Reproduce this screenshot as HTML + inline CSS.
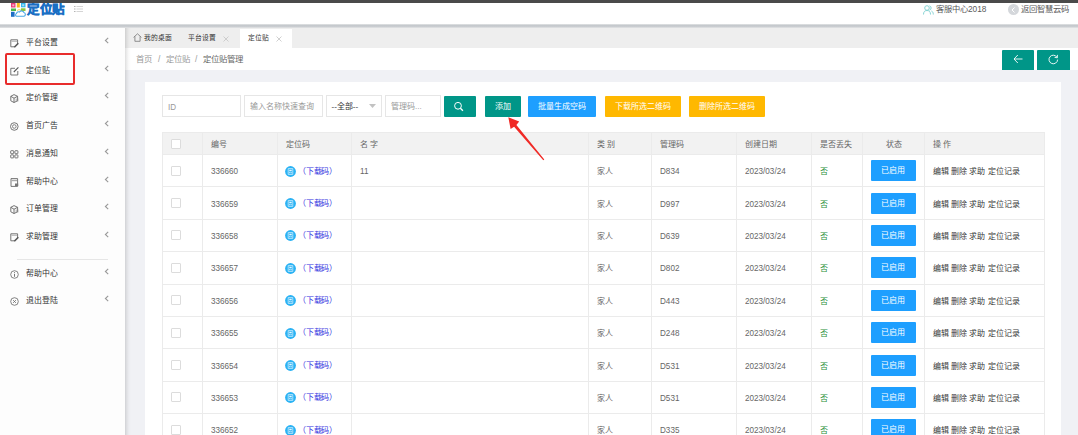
<!DOCTYPE html>
<html lang="zh-CN">
<head>
<meta charset="utf-8">
<style>
*{margin:0;padding:0;box-sizing:border-box}
html,body{width:1078px;height:435px;overflow:hidden;background:#f2f2f2;font-family:"Liberation Sans",sans-serif;color:#333}
.a{position:absolute}
#topbar{left:0;top:0;width:1078px;height:3px;background:#4a4a4a;z-index:5}
#header{left:0;top:3px;width:1078px;height:22px;background:#fff;z-index:3}
#hshadow{left:0;top:24px;width:1078px;height:4px;background:linear-gradient(#e8e9ea,#c4c8cc 30%,#c8cbcf 60%,#e4e5e6);z-index:4}
#side{left:0;top:28px;width:125px;height:407px;background:#fdfdfd;z-index:2}
#sshadow{left:125px;top:25px;width:6px;height:410px;background:linear-gradient(90deg,rgba(0,0,0,.13),rgba(0,0,0,.07) 30%,rgba(0,0,0,.02) 65%,rgba(0,0,0,0));z-index:2}
.nav{position:absolute;left:0;width:124px;height:20px;font-size:7.9px;font-weight:500;color:#333;line-height:20px}
.nav .ic{position:absolute;left:10px;top:6px;width:9px;height:9px}
.nav .tx{position:absolute;left:26px;top:0}
.nav .ch{position:absolute;left:103.5px;top:4px;width:6px;height:7px}
#tabs{left:124px;top:25px;width:954px;height:23px;background:#eeeeee}
#crumb{left:124px;top:48px;width:954px;height:22px;background:#fff}
#content{left:124px;top:70px;width:954px;height:365px;background:#f0f1f5}
#card{left:145px;top:82px;width:916px;height:353px;background:#fff}
.tab{position:absolute;top:3.3px;height:19px;line-height:19px;font-size:6.8px;font-weight:500;color:#333}
.crumb{position:absolute;top:0;height:22px;line-height:22px;font-size:8.4px;color:#999}
.inp{position:absolute;top:95px;height:22px;border:1px solid #e6e6e6;background:#fff;font-size:8px;color:#999;line-height:21.5px;padding-left:5px}
.btn{position:absolute;top:96px;height:21px;line-height:21px;font-size:8px;color:#fff;text-align:center;border-radius:1px}
table{position:absolute;left:162px;top:132px;border-collapse:collapse;table-layout:fixed;font-size:8px;color:#666}
th{height:22px;background:#f2f2f2;font-weight:normal;text-align:left;padding-left:8px;border:1px solid #ebebeb;color:#666}
td{height:32.4px;text-align:left;padding-left:8px;border:1px solid #ebebeb;color:#666;background:#fff}
.cb{display:inline-block;width:10px;height:10px;border:1px solid #dcdcdc;background:#fff;vertical-align:middle;border-radius:1px}
.qr{display:inline-block;vertical-align:middle;position:relative;top:-0.2px;left:-1.5px}
.n{display:inline-block;font-size:9.8px;transform:scaleX(.83);transform-origin:0 50%}
.dl{color:#3333e0;margin-left:1px;letter-spacing:-0.2px}
.st{display:inline-block;width:44.5px;height:21px;line-height:21px;background:#1e9fff;color:#fff;text-align:center;border-radius:1px}
.no{color:#2a8f3a}
.op{color:#3a3a3a!important}
</style>
</head>
<body>
<div id="topbar" class="a"></div>
<div id="hshadow" class="a"></div>
<div id="sshadow" class="a"></div>
<div id="header" class="a">
  <!-- logo -->
  <svg class="a" style="left:11px;top:0px" width="15" height="14" viewBox="0 0 15 14">
    <rect x="0" y="0" width="4.5" height="4.5" fill="#e8397a"/><rect x="1.3" y="1.3" width="2" height="2" fill="#f7b0c8"/>
    <rect x="5.8" y="0" width="3" height="4.5" fill="#f5b81c"/>
    <rect x="10" y="0" width="4.5" height="4.3" fill="#35b8ee"/><rect x="11.2" y="1.2" width="2" height="2" fill="#a8dcf5"/>
    <rect x="0" y="5.5" width="5" height="2.5" fill="#4db848"/>
    <rect x="10" y="5.3" width="4.5" height="2.7" fill="#8cc63f"/>
    <path d="M6 7.5 Q8 5.8 10 7.2" fill="none" stroke="#f3c94a" stroke-width=".9"/>
    <rect x="0" y="8.8" width="3.6" height="5" fill="#1f6fc5"/>
    <path d="M5.5 13.3 H13 A2 2 0 0 0 13 9.5 A2.6 2.6 0 0 0 8.5 9 A2 2 0 0 0 5.5 10.5 A1.5 1.5 0 0 0 5.5 13.3Z" fill="#fff" stroke="#4aa8e6" stroke-width="1.1"/>
  </svg>
  <div class="a" style="left:27px;top:-1px;font-size:12.5px;font-weight:900;color:#1a6fc4;-webkit-text-stroke:.5px #1a6fc4;line-height:16px;letter-spacing:-0.5px">定位贴</div>
  <!-- hamburger -->
  <svg class="a" style="left:73px;top:1px" width="11" height="9" viewBox="0 0 11 9"><path d="M1 2.5H2.5M1 5H2.5M1 7.5H2.5" stroke="#aaa" stroke-width=".9"/><path d="M3.5 2.5H10M3.5 5H10M3.5 7.5H10" stroke="#d0d0d0" stroke-width=".9"/></svg>
  <!-- right -->
  <svg class="a" style="left:923px;top:2px" width="11" height="10" viewBox="0 0 11 10"><circle cx="4" cy="3" r="2.3" fill="none" stroke="#86d3d3" stroke-width="1"/><path d="M0.5 9.5 C0.5 6.5 2 5.5 4 5.5 C6 5.5 7.5 6.5 7.5 9.5" fill="none" stroke="#86d3d3" stroke-width="1"/><path d="M6.5 0.8 A2.3 2.3 0 0 1 6.5 5.2 M8.5 6 C9.5 6.5 10.3 7.5 10.3 9.5" fill="none" stroke="#86d3d3" stroke-width="1"/></svg>
  <div class="a" style="left:936px;top:0;font-size:8.3px;line-height:13px;color:#5a5a5a">客服中心2018</div>
  <div class="a" style="left:1008px;top:1px;width:11px;height:11px;border-radius:50%;background:#d4d7db"></div>
  <svg class="a" style="left:1011px;top:3.5px" width="5" height="6" viewBox="0 0 5 6"><path d="M3.5 0.5 L1 3 L3.5 5.5" fill="none" stroke="#fff" stroke-width="1"/></svg>
  <div class="a" style="left:1020.5px;top:0;font-size:8.3px;line-height:13px;color:#5a5a5a">返回智慧云码</div>
</div>
<div id="side" class="a">
  <div class="nav" style="top:4.5px"><svg class="ic" viewBox="0 0 9 9"><path d="M.8 .8H7.6V5M.8 .8V7.8H4.5" fill="none" stroke="#666" stroke-width=".9"/><path d="M1.5 2.3H7" stroke="#aaa" stroke-width=".9"/><path d="M4.3 8.3L8.3 4.3" stroke="#555" stroke-width="1.6"/></svg><span class="tx">平台设置</span><svg class="ch" viewBox="0 0 6 7"><path d="M4.2 .8L1.4 3.5L4.2 6.2" fill="none" stroke="#999" stroke-width="1.1"/></svg></div>
  <div class="nav" style="top:32.5px"><svg class="ic" viewBox="0 0 9 9"><path d="M5 1.3H.8V8H7.8V4" fill="none" stroke="#666" stroke-width=".9"/><path d="M3.8 5L8.4 .4" stroke="#555" stroke-width="1.1"/></svg><span class="tx">定位贴</span><svg class="ch" viewBox="0 0 6 7"><path d="M4.2 .8L1.4 3.5L4.2 6.2" fill="none" stroke="#999" stroke-width="1.1"/></svg></div>
  <div class="nav" style="top:60.3px"><svg class="ic" viewBox="0 0 9 9"><path d="M.8 2.3L4 .6L7.6 2.3V6.8L4 8.5L.8 6.8Z M.8 2.3L4 4.2L7.6 2.3M4 4.2V8.5" fill="none" stroke="#666" stroke-width=".9"/><path d="M6.2 4.5V7.5M7.8 4.5V7.5" stroke="#888" stroke-width=".7"/></svg><span class="tx">定价管理</span><svg class="ch" viewBox="0 0 6 7"><path d="M4.2 .8L1.4 3.5L4.2 6.2" fill="none" stroke="#999" stroke-width="1.1"/></svg></div>
  <div class="nav" style="top:88px"><svg class="ic" viewBox="0 0 9 9"><circle cx="4.3" cy="4.5" r="3.8" fill="none" stroke="#666" stroke-width=".9"/><circle cx="4.3" cy="4.5" r="1.8" fill="none" stroke="#666" stroke-width=".8"/></svg><span class="tx">首页广告</span><svg class="ch" viewBox="0 0 6 7"><path d="M4.2 .8L1.4 3.5L4.2 6.2" fill="none" stroke="#999" stroke-width="1.1"/></svg></div>
  <div class="nav" style="top:115.8px"><svg class="ic" viewBox="0 0 9 9"><rect x=".7" y=".7" width="3" height="3" rx=".5" fill="none" stroke="#666" stroke-width=".9"/><rect x="4.9" y=".7" width="3" height="3" rx=".5" fill="none" stroke="#666" stroke-width=".9"/><rect x=".7" y="4.9" width="3" height="3" rx=".5" fill="none" stroke="#666" stroke-width=".9"/><rect x="4.9" y="4.9" width="3" height="3" rx=".5" fill="none" stroke="#666" stroke-width=".9"/></svg><span class="tx">消息通知</span><svg class="ch" viewBox="0 0 6 7"><path d="M4.2 .8L1.4 3.5L4.2 6.2" fill="none" stroke="#999" stroke-width="1.1"/></svg></div>
  <div class="nav" style="top:143.8px"><svg class="ic" viewBox="0 0 9 9"><path d="M1 .6H7.6V8.4H1Z" fill="none" stroke="#666" stroke-width=".9"/><path d="M1.5 2.5H7" stroke="#aaa" stroke-width="1.4"/><rect x="5" y="5.5" width="3.2" height="2.5" fill="#777"/></svg><span class="tx">帮助中心</span><svg class="ch" viewBox="0 0 6 7"><path d="M4.2 .8L1.4 3.5L4.2 6.2" fill="none" stroke="#999" stroke-width="1.1"/></svg></div>
  <div class="nav" style="top:171.1px"><svg class="ic" viewBox="0 0 9 9"><path d="M.8 2.3L4 .6L7.6 2.3V6.8L4 8.5L.8 6.8Z M.8 2.3L4 4.2L7.6 2.3M4 4.2V8.5" fill="none" stroke="#666" stroke-width=".9"/><path d="M6.2 4.5V7.5M7.8 4.5V7.5" stroke="#888" stroke-width=".7"/></svg><span class="tx">订单管理</span><svg class="ch" viewBox="0 0 6 7"><path d="M4.2 .8L1.4 3.5L4.2 6.2" fill="none" stroke="#999" stroke-width="1.1"/></svg></div>
  <div class="nav" style="top:199.1px"><svg class="ic" viewBox="0 0 9 9"><path d="M.8 .8H7.6V5M.8 .8V7.8H4.5" fill="none" stroke="#666" stroke-width=".9"/><path d="M1.5 2.3H7" stroke="#aaa" stroke-width=".9"/><path d="M4.3 8.3L8.3 4.3" stroke="#555" stroke-width="1.6"/></svg><span class="tx">求助管理</span><svg class="ch" viewBox="0 0 6 7"><path d="M4.2 .8L1.4 3.5L4.2 6.2" fill="none" stroke="#999" stroke-width="1.1"/></svg></div>
  <div class="nav" style="top:236px"><svg class="ic" viewBox="0 0 9 9"><circle cx="4.5" cy="4.5" r="3.8" fill="none" stroke="#666" stroke-width=".8"/><path d="M4.5 3.8V6.8M4.5 2.2V3" stroke="#666" stroke-width=".9"/></svg><span class="tx">帮助中心</span><svg class="ch" viewBox="0 0 6 7"><path d="M4.2 .8L1.4 3.5L4.2 6.2" fill="none" stroke="#999" stroke-width="1.1"/></svg></div>
  <div class="nav" style="top:263.1px"><svg class="ic" viewBox="0 0 9 9"><circle cx="4.5" cy="4.5" r="3.8" fill="none" stroke="#666" stroke-width=".8"/><path d="M3.1 3.1L5.9 5.9M5.9 3.1L3.1 5.9" stroke="#666" stroke-width=".8"/></svg><span class="tx">退出登陆</span><svg class="ch" viewBox="0 0 6 7"><path d="M4.2 .8L1.4 3.5L4.2 6.2" fill="none" stroke="#999" stroke-width="1.1"/></svg></div>
  <div class="a" style="left:17px;top:231px;width:91px;height:1px;background:#e6e6e6"></div>
  <div class="a" style="left:5px;top:24.5px;width:70px;height:32px;border:2px solid #e82c2c;border-radius:2px"></div>
</div>
<div id="tabs" class="a">
  <svg class="a" style="left:9px;top:8px" width="9" height="9" viewBox="0 0 9 9"><path d="M.6 4.4L4.5.8L8.4 4.4M1.9 3.4V8.3H7.1V3.4" fill="none" stroke="#777" stroke-width=".8"/></svg>
  <div class="tab" style="left:20px">我的桌面</div>
  <div class="tab" style="left:64px">平台设置</div>
  <svg class="a" style="left:98.5px;top:10.5px" width="6" height="6" viewBox="0 0 6 6"><path d="M.5 .5L5.5 5.5M5.5 .5L.5 5.5" stroke="#c4c4c4" stroke-width=".8"/></svg>
  <div class="a" style="left:116px;top:4px;width:52px;height:19px;background:#fff"></div>
  <div class="tab" style="left:124px">定位贴</div>
  <svg class="a" style="left:151.5px;top:10.5px" width="6" height="6" viewBox="0 0 6 6"><path d="M.5 .5L5.5 5.5M5.5 .5L.5 5.5" stroke="#c4c4c4" stroke-width=".8"/></svg>
</div>
<div id="crumb" class="a">
  <div class="crumb" style="left:12px">首页</div>
  <div class="crumb" style="left:34px">/</div>
  <div class="crumb" style="left:41.5px">定位贴</div>
  <div class="crumb" style="left:71px">/</div>
  <div class="crumb" style="left:78.5px;color:#666">定位贴管理</div>
  <div class="a" style="left:878px;top:2px;width:32px;height:20.5px;background:#009688;border-radius:1px"></div>
  <svg class="a" style="left:888.5px;top:5.5px" width="10" height="10" viewBox="0 0 10 10"><path d="M9.5 5H1M4.8 1L1 5L4.8 9" fill="none" stroke="#fff" stroke-width=".9"/></svg>
  <div class="a" style="left:913px;top:2px;width:33px;height:20.5px;background:#009688;border-radius:1px"></div>
  <svg class="a" style="left:923.5px;top:5.5px" width="11" height="11" viewBox="0 0 11 11"><path d="M9 3.3A4.3 4.3 0 1 0 9.6 5.6" fill="none" stroke="#fff" stroke-width=".9"/><path d="M9.4 .9L9.3 3.8L6.6 3.4" fill="none" stroke="#fff" stroke-width=".9"/></svg>
</div>
<div id="content" class="a"></div>
<div id="card" class="a"></div>

<!-- search bar -->
<div class="inp" style="left:162px;width:79px"><span class="n" style="font-size:9.5px;transform:scaleX(.85)">ID</span></div>
<div class="inp" style="left:244px;width:79px">输入名称快速查询</div>
<div class="inp" style="left:325.5px;width:56px;color:#333">--全部--</div>
<svg class="a" style="left:369px;top:104px" width="7" height="4" viewBox="0 0 7 4"><path d="M0 0H7L3.5 4Z" fill="#c2c2c2"/></svg>
<div class="inp" style="left:385px;width:56px">管理码...</div>
<div class="btn" style="left:444px;width:32px;background:#009688"></div>
<svg class="a" style="left:453px;top:101px" width="12" height="12" viewBox="0 0 12 12"><circle cx="5" cy="4.8" r="3.4" fill="none" stroke="#fff" stroke-width="1"/><path d="M7.4 7.2L9.9 9.7" stroke="#fff" stroke-width="1.3"/></svg>
<div class="btn" style="left:485px;width:36px;background:#009688">添加</div>
<div class="btn" style="left:528px;width:68px;background:#1e9fff">批量生成空码</div>
<div class="btn" style="left:604.5px;width:76px;background:#ffb800">下载所选二维码</div>
<div class="btn" style="left:688.5px;width:76px;background:#ffb800">删除所选二维码</div>

<table>
<colgroup><col style="width:40px"><col style="width:75px"><col style="width:74px"><col style="width:237px"><col style="width:63px"><col style="width:85px"><col style="width:75px"><col style="width:51px"><col style="width:62px"><col style="width:120px"></colgroup>
<tr><th><span class="cb"></span></th><th>编号</th><th>定位码</th><th>名 字</th><th>类 别</th><th>管理码</th><th>创建日期</th><th>是否丢失</th><th style="text-align:center;padding-left:0">状态</th><th>操 作</th></tr>
<tr><td><span class="cb"></span></td><td><span class="n">336660</span></td><td><svg class="qr" width="11" height="11" viewBox="0 0 11 11"><circle cx="5.5" cy="5.5" r="5.4" fill="#2ab2f4"/><path d="M3.2 2.6h4.6v5.8H3.2z" fill="none" stroke="#cfeefd" stroke-width=".8"/><path d="M4.3 3.8h2.4v1.4H4.3zM4.3 6h1v1.2h-1zM5.8 6.2h1v1h-1z" fill="#e6f6fe"/></svg><span class="dl">（下载码）</span></td><td><span class="n">11</span></td><td>家人</td><td><span class="n">D834</span></td><td><span class="n">2023/03/24</span></td><td class="no">否</td><td><span class="st">已启用</span></td><td class="op">编辑 删除 求助 定位记录</td></tr>
<tr><td><span class="cb"></span></td><td><span class="n">336659</span></td><td><svg class="qr" width="11" height="11" viewBox="0 0 11 11"><circle cx="5.5" cy="5.5" r="5.4" fill="#2ab2f4"/><path d="M3.2 2.6h4.6v5.8H3.2z" fill="none" stroke="#cfeefd" stroke-width=".8"/><path d="M4.3 3.8h2.4v1.4H4.3zM4.3 6h1v1.2h-1zM5.8 6.2h1v1h-1z" fill="#e6f6fe"/></svg><span class="dl">（下载码）</span></td><td></td><td>家人</td><td><span class="n">D997</span></td><td><span class="n">2023/03/24</span></td><td class="no">否</td><td><span class="st">已启用</span></td><td class="op">编辑 删除 求助 定位记录</td></tr>
<tr><td><span class="cb"></span></td><td><span class="n">336658</span></td><td><svg class="qr" width="11" height="11" viewBox="0 0 11 11"><circle cx="5.5" cy="5.5" r="5.4" fill="#2ab2f4"/><path d="M3.2 2.6h4.6v5.8H3.2z" fill="none" stroke="#cfeefd" stroke-width=".8"/><path d="M4.3 3.8h2.4v1.4H4.3zM4.3 6h1v1.2h-1zM5.8 6.2h1v1h-1z" fill="#e6f6fe"/></svg><span class="dl">（下载码）</span></td><td></td><td>家人</td><td><span class="n">D639</span></td><td><span class="n">2023/03/24</span></td><td class="no">否</td><td><span class="st">已启用</span></td><td class="op">编辑 删除 求助 定位记录</td></tr>
<tr><td><span class="cb"></span></td><td><span class="n">336657</span></td><td><svg class="qr" width="11" height="11" viewBox="0 0 11 11"><circle cx="5.5" cy="5.5" r="5.4" fill="#2ab2f4"/><path d="M3.2 2.6h4.6v5.8H3.2z" fill="none" stroke="#cfeefd" stroke-width=".8"/><path d="M4.3 3.8h2.4v1.4H4.3zM4.3 6h1v1.2h-1zM5.8 6.2h1v1h-1z" fill="#e6f6fe"/></svg><span class="dl">（下载码）</span></td><td></td><td>家人</td><td><span class="n">D802</span></td><td><span class="n">2023/03/24</span></td><td class="no">否</td><td><span class="st">已启用</span></td><td class="op">编辑 删除 求助 定位记录</td></tr>
<tr><td><span class="cb"></span></td><td><span class="n">336656</span></td><td><svg class="qr" width="11" height="11" viewBox="0 0 11 11"><circle cx="5.5" cy="5.5" r="5.4" fill="#2ab2f4"/><path d="M3.2 2.6h4.6v5.8H3.2z" fill="none" stroke="#cfeefd" stroke-width=".8"/><path d="M4.3 3.8h2.4v1.4H4.3zM4.3 6h1v1.2h-1zM5.8 6.2h1v1h-1z" fill="#e6f6fe"/></svg><span class="dl">（下载码）</span></td><td></td><td>家人</td><td><span class="n">D443</span></td><td><span class="n">2023/03/24</span></td><td class="no">否</td><td><span class="st">已启用</span></td><td class="op">编辑 删除 求助 定位记录</td></tr>
<tr><td><span class="cb"></span></td><td><span class="n">336655</span></td><td><svg class="qr" width="11" height="11" viewBox="0 0 11 11"><circle cx="5.5" cy="5.5" r="5.4" fill="#2ab2f4"/><path d="M3.2 2.6h4.6v5.8H3.2z" fill="none" stroke="#cfeefd" stroke-width=".8"/><path d="M4.3 3.8h2.4v1.4H4.3zM4.3 6h1v1.2h-1zM5.8 6.2h1v1h-1z" fill="#e6f6fe"/></svg><span class="dl">（下载码）</span></td><td></td><td>家人</td><td><span class="n">D248</span></td><td><span class="n">2023/03/24</span></td><td class="no">否</td><td><span class="st">已启用</span></td><td class="op">编辑 删除 求助 定位记录</td></tr>
<tr><td><span class="cb"></span></td><td><span class="n">336654</span></td><td><svg class="qr" width="11" height="11" viewBox="0 0 11 11"><circle cx="5.5" cy="5.5" r="5.4" fill="#2ab2f4"/><path d="M3.2 2.6h4.6v5.8H3.2z" fill="none" stroke="#cfeefd" stroke-width=".8"/><path d="M4.3 3.8h2.4v1.4H4.3zM4.3 6h1v1.2h-1zM5.8 6.2h1v1h-1z" fill="#e6f6fe"/></svg><span class="dl">（下载码）</span></td><td></td><td>家人</td><td><span class="n">D531</span></td><td><span class="n">2023/03/24</span></td><td class="no">否</td><td><span class="st">已启用</span></td><td class="op">编辑 删除 求助 定位记录</td></tr>
<tr><td><span class="cb"></span></td><td><span class="n">336653</span></td><td><svg class="qr" width="11" height="11" viewBox="0 0 11 11"><circle cx="5.5" cy="5.5" r="5.4" fill="#2ab2f4"/><path d="M3.2 2.6h4.6v5.8H3.2z" fill="none" stroke="#cfeefd" stroke-width=".8"/><path d="M4.3 3.8h2.4v1.4H4.3zM4.3 6h1v1.2h-1zM5.8 6.2h1v1h-1z" fill="#e6f6fe"/></svg><span class="dl">（下载码）</span></td><td></td><td>家人</td><td><span class="n">D531</span></td><td><span class="n">2023/03/24</span></td><td class="no">否</td><td><span class="st">已启用</span></td><td class="op">编辑 删除 求助 定位记录</td></tr>
<tr><td><span class="cb"></span></td><td><span class="n">336652</span></td><td><svg class="qr" width="11" height="11" viewBox="0 0 11 11"><circle cx="5.5" cy="5.5" r="5.4" fill="#2ab2f4"/><path d="M3.2 2.6h4.6v5.8H3.2z" fill="none" stroke="#cfeefd" stroke-width=".8"/><path d="M4.3 3.8h2.4v1.4H4.3zM4.3 6h1v1.2h-1zM5.8 6.2h1v1h-1z" fill="#e6f6fe"/></svg><span class="dl">（下载码）</span></td><td></td><td>家人</td><td><span class="n">D335</span></td><td><span class="n">2023/03/24</span></td><td class="no">否</td><td><span class="st">已启用</span></td><td class="op">编辑 删除 求助 定位记录</td></tr>
</table>

<!-- red arrow -->
<svg class="a" style="left:0;top:0;z-index:9" width="1078" height="435" viewBox="0 0 1078 435"><path d="M508.3 117.3 L519.2 121.6 L516.4 124.9 L544.3 159.4 L543.3 160.2 L514.1 126.8 L510.6 128.9 Z" fill="#f02a26"/></svg>
</body>
</html>
